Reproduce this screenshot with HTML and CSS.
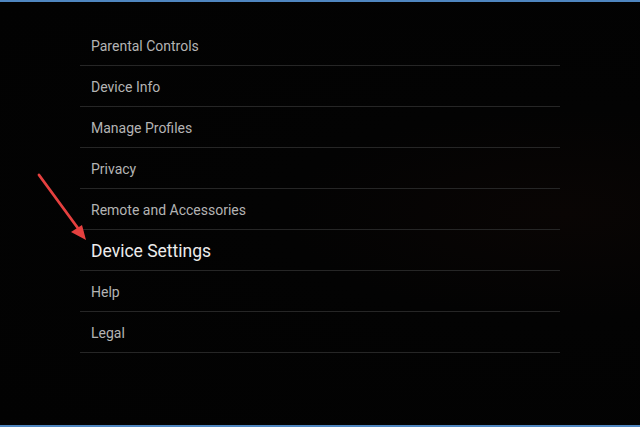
FILE: index.html
```html
<!DOCTYPE html>
<html>
<head>
<meta charset="utf-8">
<link rel="stylesheet" href="styles.css">
</head>
<body>
<div class="screen">
  <ul class="menu">
    <li class="item">Parental Controls</li>
    <li class="item">Device Info</li>
    <li class="item">Manage Profiles</li>
    <li class="item">Privacy</li>
    <li class="item">Remote and Accessories</li>
    <li class="item active">Device Settings</li>
    <li class="item">Help</li>
    <li class="item">Legal</li>
  </ul>
  <svg class="arrow" width="60" height="80" viewBox="0 0 60 80">
    <line x1="9" y1="8" x2="50" y2="64" stroke="#e5403f" stroke-width="2.8" stroke-linecap="round"/>
    <polygon points="56,73 41,65 52,58" fill="#e5403f"/>
  </svg>
</div>
</body>
</html>
```
FILE: styles.css
```css
html, body {
  margin: 0;
  padding: 0;
  background: #000;
}
.screen {
  position: relative;
  width: 640px;
  height: 427px;
  box-sizing: border-box;
  border-top: 2px solid #4f86c0;
  border-bottom: 2px solid #4f86c0;
  background: radial-gradient(ellipse at 88% 50%, #090504 0%, #030303 35%, #020202 100%);
  font-family: Roboto, "Noto Sans", sans-serif;
  padding-top: 23px;
}
.menu {
  list-style: none;
  margin: 0 0 0 80px;
  padding: 0;
  width: 480px;
}
.item {
  height: 38px;
  border-bottom: 1px solid #262626;
  box-sizing: content-box;
  display: flex;
  align-items: center;
  padding-left: 11px;
  padding-top: 2px;
  font-size: 14px;
  color: #b4b4b4;
}
.item.active {
  font-size: 17.5px;
  color: #ececec;
}
.arrow {
  position: absolute;
  left: 30px;
  top: 165px;
}
```
